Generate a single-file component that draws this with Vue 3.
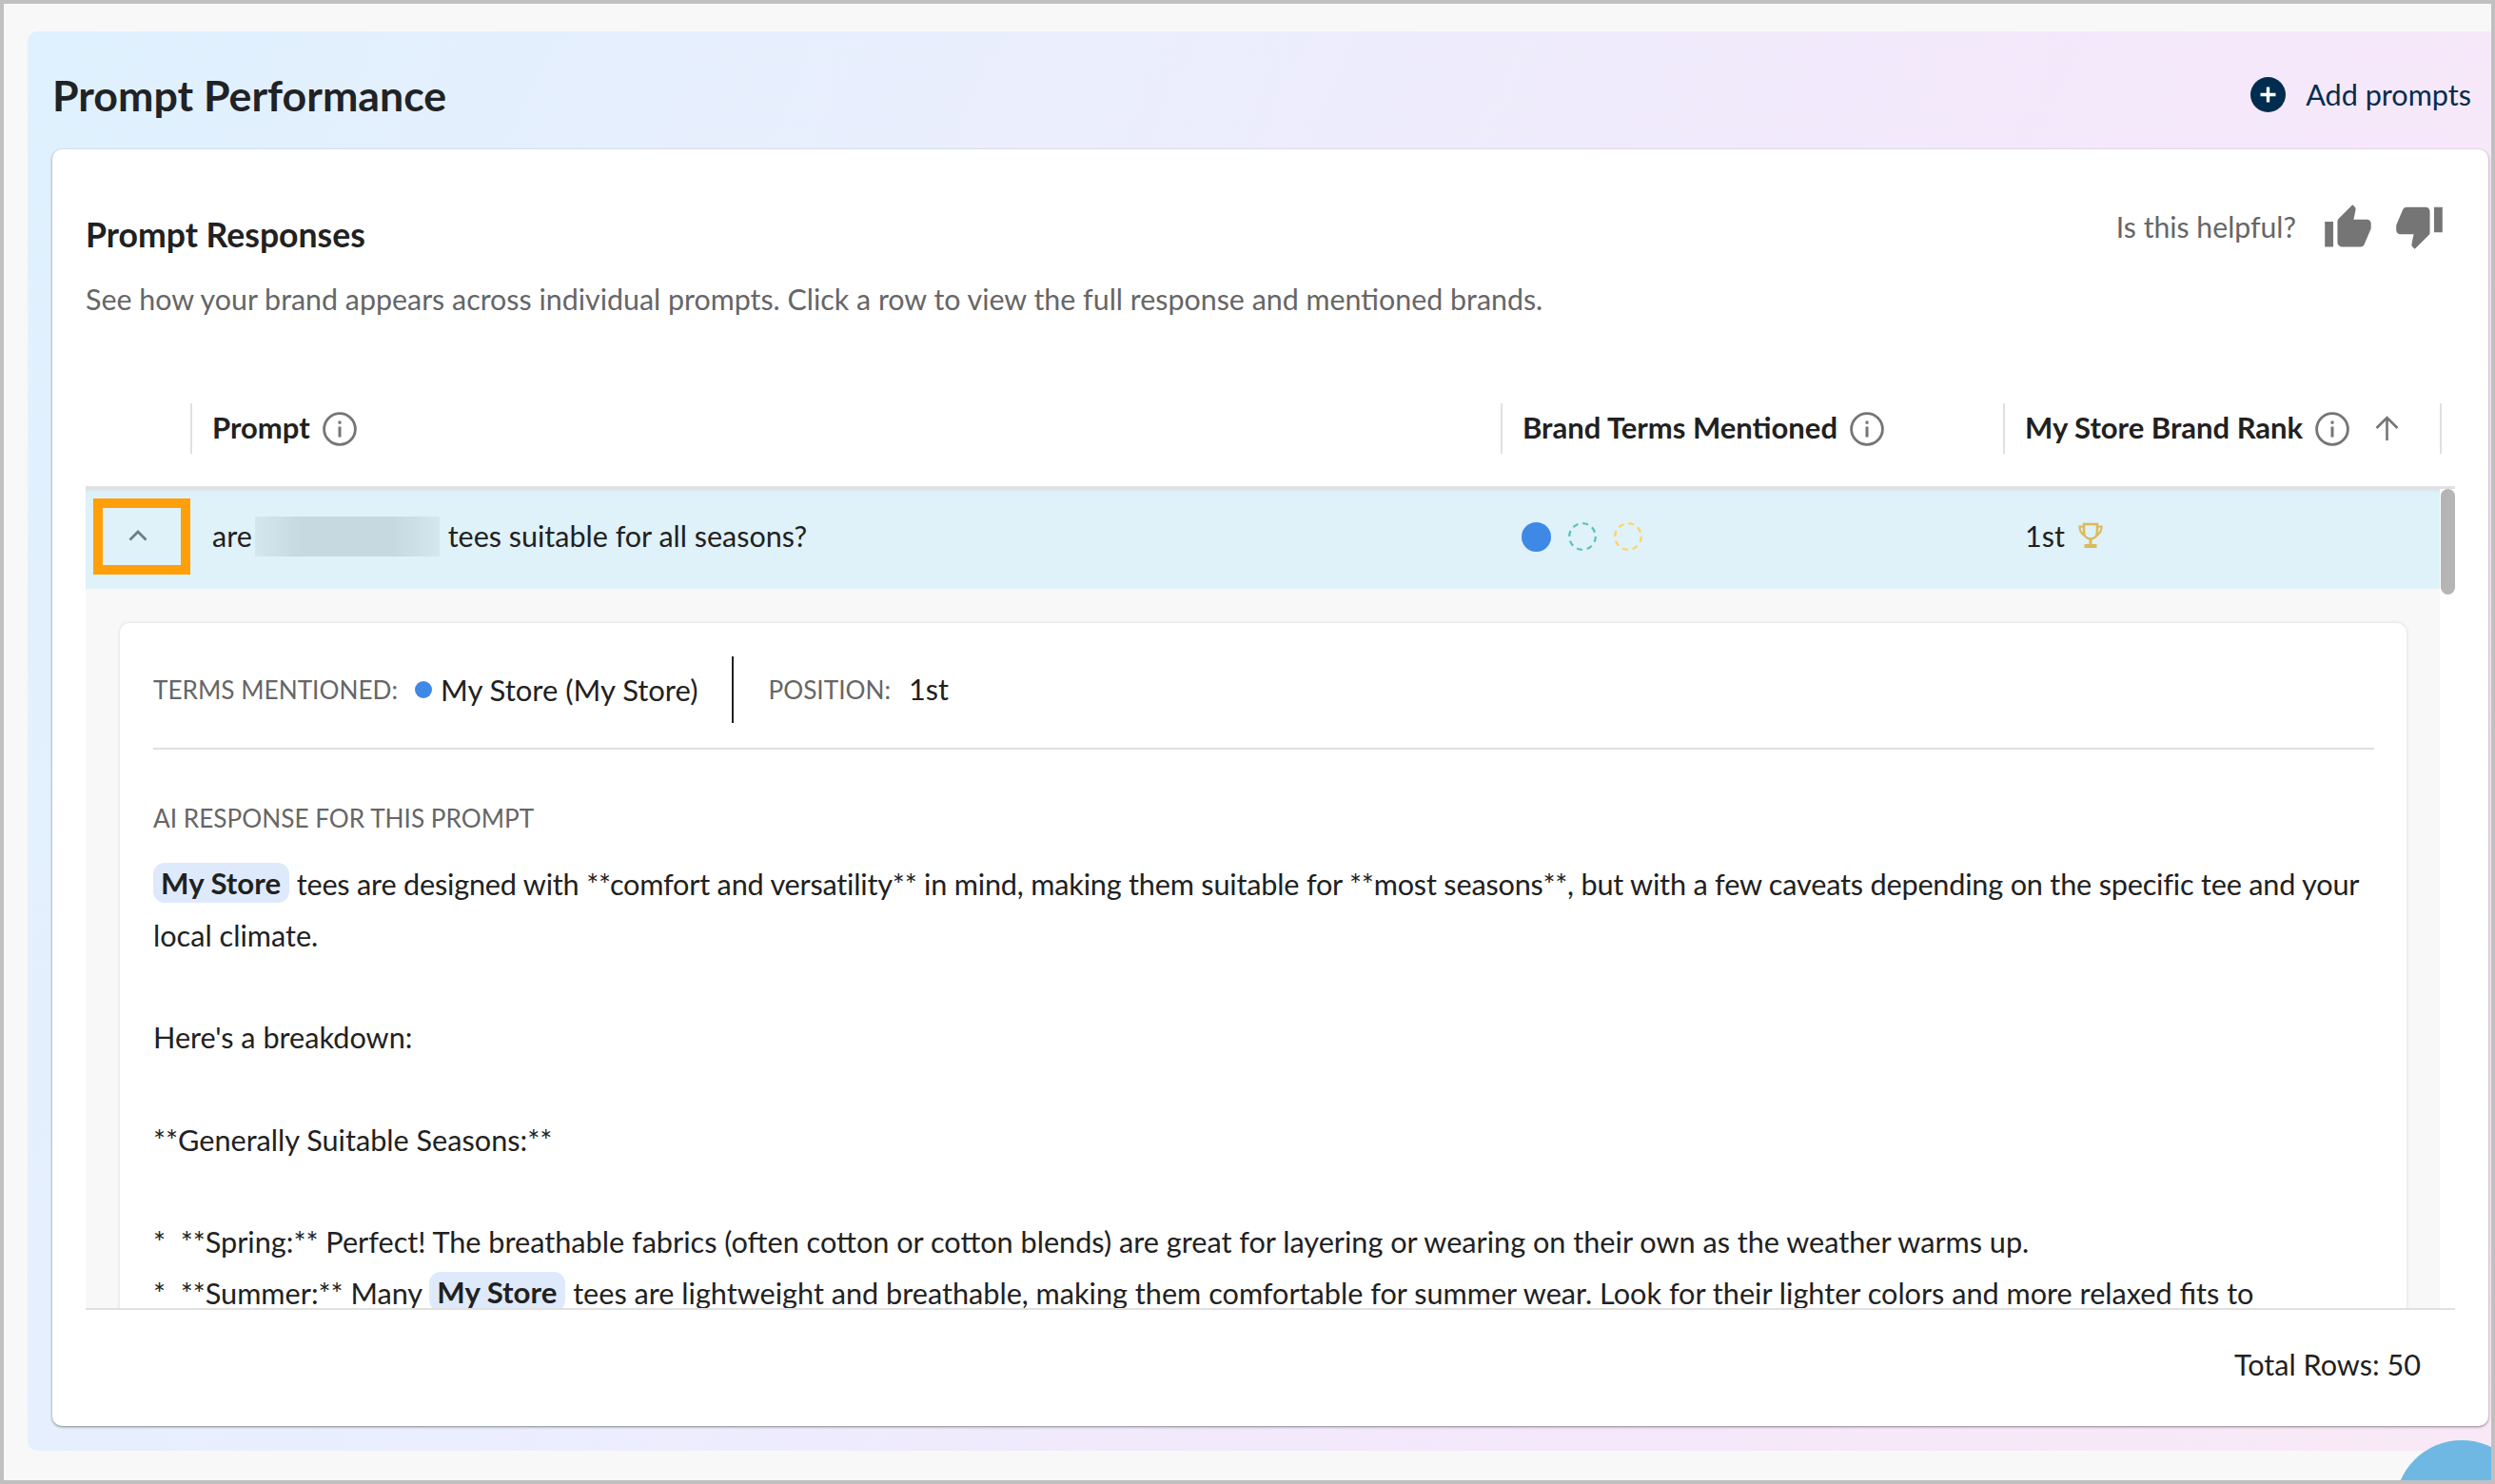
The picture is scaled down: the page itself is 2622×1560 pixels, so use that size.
<script setup>
const intro = 'See how your brand appears across individual prompts. Click a row to view the full response and mentioned brands.'
const columns = [
  { label: 'Prompt', info: true },
  { label: 'Brand Terms Mentioned', info: true },
  { label: 'My Store Brand Rank', info: true, sort: true }
]
const segments = [
  { t: 'My Store', cls: 'chip' },
  { t: ' tees are designed with **comfort and versatility** in mind, making them suitable for **most seasons**, but with a few caveats depending on the specific tee and your', cls: 'tight' },
  { t: ' local climate.\n\nHere\'s a breakdown:\n\n**Generally Suitable Seasons:**\n\n*  **Spring:** Perfect! The breathable fabrics (often cotton or cotton blends) are great for layering or wearing on their own as the weather warms up.\n*  **Summer:** Many ' },
  { t: 'My Store', cls: 'chip' },
  { t: ' tees are lightweight and breathable, making them comfortable for summer wear. Look for their lighter colors and more relaxed fits to' }
]
</script>

<template>
  <div class="page">
    <section class="panel">
      <header class="panel-head">
        <h1 class="panel-title">Prompt Performance</h1>
        <div class="add">
          <svg class="add-icon" viewBox="0 0 37 37">
            <circle cx="18.5" cy="18.5" r="18.5" fill="#002d4f" />
            <path d="M18.5 10.5v16M10.5 18.5h16" stroke="#fff" stroke-width="3.4" fill="none" />
          </svg>
          <span>Add prompts</span>
        </div>
      </header>

      <div class="card">
        <div class="intro">
          <div>
            <h2 class="card-title">Prompt Responses</h2>
            <p class="card-sub">{{ intro }}</p>
          </div>
          <div class="helpful">
            <span class="helpful-text">Is this helpful?</span>
            <svg class="thumb thumb-up" viewBox="0 0 24 24"><path d="M1 21h4V9H1v12zm22-11c0-1.1-.9-2-2-2h-6.31l.95-4.57.03-.32c0-.41-.17-.79-.44-1.06L14.17 1 7.59 7.59C7.22 7.95 7 8.45 7 9v10c0 1.1.9 2 2 2h9c.83 0 1.54-.5 1.8-1.22l3.02-7.05c.08-.23.13-.47.13-.73v-2z" /></svg>
            <svg class="thumb thumb-down" viewBox="0 0 24 24"><path d="M15 3H6c-.83 0-1.54.5-1.84 1.22l-3.02 7.05c-.09.23-.14.47-.14.73v2c0 1.1.9 2 2 2h6.31l-.95 4.57-.03.32c0 .41.17.79.44 1.06L9.83 23l6.59-6.59c.36-.36.58-.86.58-1.41V5c0-1.1-.9-2-2-2zm4 0v12h4V3h-4z" /></svg>
          </div>
        </div>

        <div class="thead">
          <div class="th-empty"></div>
          <div v-for="c in columns" :key="c.label" class="th">
            <span class="th-label">{{ c.label }}</span>
            <svg class="info" viewBox="0 0 36 36">
              <circle cx="18" cy="18" r="16.4" fill="none" stroke="#757575" stroke-width="2.8" />
              <rect x="16.5" y="9.5" width="3" height="3.2" fill="#757575" />
              <rect x="16.5" y="15.5" width="3" height="11" fill="#757575" />
            </svg>
            <svg v-if="c.sort" class="sort" viewBox="0 0 27 27">
              <path d="M13.5 26V2M2.5 13L13.5 2l11 11" fill="none" stroke="#757575" stroke-width="2.6" />
            </svg>
          </div>
          <div class="th-end"></div>
        </div>

        <div class="tbody">
          <div class="row">
            <div class="toggle">
              <svg class="chevron" viewBox="0 0 20 12"><path d="M1.5 10.5L10 2l8.500 8.500" fill="none" stroke="#6d7c86" stroke-width="2.800" /></svg>
            </div>
            <div class="cell prompt-cell">
              <span>are</span>
              <span class="redacted"></span>
              <span>tees suitable for all seasons?</span>
            </div>
            <div class="cell dots">
              <span class="dot solid"></span>
              <svg class="ring" viewBox="0 0 30 30"><circle cx="15" cy="15" r="13.800" fill="none" stroke="#5cc2ba" stroke-width="2.300" stroke-dasharray="6 4.800" /></svg>
              <svg class="ring" viewBox="0 0 30 30"><circle cx="15" cy="15" r="13.800" fill="none" stroke="#ffd55a" stroke-width="2.300" stroke-dasharray="6 4.800" /></svg>
            </div>
            <div class="cell rank-cell">
              <span>1st</span>
              <svg class="trophy" viewBox="0 0 26 27">
                <path d="M6 2h14v8c0 4.500-3 7.500-7 7.500S6 14.500 6 10V2z" fill="none" stroke="#dcb95a" stroke-width="2.600" />
                <path d="M6 4.500H1.500c0 5 1.500 8 6 9.500M20 4.500h4.500c0 5-1.500 8-6 9.500" fill="none" stroke="#dcb95a" stroke-width="2.200" />
                <path d="M13 17.500V24" stroke="#dcb95a" stroke-width="3" />
                <rect x="6.500" y="23" width="13" height="4" fill="#dcb95a" />
              </svg>
            </div>
          </div>

          <div class="expand">
            <div class="detail">
              <div class="meta">
                <span class="meta-label">TERMS MENTIONED:</span>
                <span class="meta-dot"></span>
                <span class="meta-value">My Store (My Store)</span>
                <span class="meta-sep"></span>
                <span class="meta-label">POSITION:</span>
                <span class="meta-pos">1st</span>
              </div>
              <div class="response-label">AI RESPONSE FOR THIS PROMPT</div>
              <div class="response"><span v-for="(s, i) in segments" :key="i" :class="s.cls">{{ s.t }}</span></div>
            </div>
          </div>
          <div class="scrollbar"></div>
        </div>

        <footer class="tfoot">Total Rows: 50</footer>
      </div>
    </section>
    <div class="fab"></div>
  </div>
</template>

<style>
html, body { margin: 0; padding: 0; }
</style>

<style scoped>
* { box-sizing: border-box; }
.page {
  position: relative;
  width: 2622px;
  height: 1560px;
  overflow: hidden;
  border: 4px solid #c0c0c0;
  background: #f8f8f8;
  padding: 29px 0 31px 25px;
  font-family: Lato, "Liberation Sans", sans-serif;
  color: #212121;
}
.panel {
  height: 100%;
  display: flex;
  flex-direction: column;
  border-radius: 10px 0 0 10px;
  padding: 0 3px 26px 26px;
  background: linear-gradient(115deg, #dff1fe 0%, #ebeefd 35%, #f5e8fb 70%, #f9e9f6 100%);
}
.panel-head {
  height: 124px;
  flex: none;
  display: flex;
  align-items: center;
  justify-content: space-between;
  padding: 9px 18px 0 0;
}
.panel-title { margin: 0; font-size: 44.7px; line-height: 56px; font-weight: 700; color: #1f2326; }
.add { display: flex; align-items: center; gap: 21px; font-size: 30.6px; color: #002d4f; }
.add-icon { width: 37px; height: 37px; display: block; }
.card {
  flex: 1;
  min-height: 0;
  background: #fff;
  border-radius: 10px;
  box-shadow: 0 1px 3px rgba(0, 0, 0, .45);
  padding: 0 35px;
  display: flex;
  flex-direction: column;
}
.intro {
  height: 267px;
  flex: none;
  display: flex;
  justify-content: space-between;
  padding-top: 66px;
  padding-right: 11px;
}
.card-title { margin: 0; font-size: 35.6px; line-height: 48px; font-weight: 700; color: #212121; }
.card-sub { margin: 21px 0 0; font-size: 30.4px; line-height: 44px; color: #666; }
.helpful { display: flex; align-items: flex-start; margin-top: -12px; }
.helpful-text { font-size: 30.2px; line-height: 55px; color: #666; margin-right: 28px; }
.thumb { width: 53px; height: 53px; display: block; fill: #757575; }
.thumb-up { margin-top: 2px; margin-right: 22px; }
.thead {
  height: 90px;
  flex: none;
  display: grid;
  grid-template-columns: 110px 1377px 528px 459px 16px;
  width: 2490px;
  align-items: start;
  border-bottom: 3px solid #e0e0e0;
}
.th {
  height: 53px;
  display: flex;
  align-items: center;
  border-left: 2px solid #e0e0e0;
  padding-left: 21px;
}
.th-label { font-size: 31px; font-weight: 700; color: #212121; margin-top: -3px; }
.info { width: 36px; height: 36px; margin-left: 13px; display: block; }
.sort { width: 27px; height: 27px; margin-left: 26px; display: block; }
.th-end { height: 53px; border-left: 2px solid #e0e0e0; }
.tbody {
  position: relative;
  width: 2490px;
  height: 863px;
  flex: none;
  overflow: hidden;
  border-bottom: 2px solid #e0e0e0;
}
.row {
  height: 105px;
  width: 2474px;
  padding-bottom: 5px;
  display: grid;
  grid-template-columns: 110px 1377px 528px 459px;
  align-items: center;
  background: #dff1f9;
  box-shadow: inset 0 4px 4px -3px rgba(0, 0, 0, .08);
  position: relative;
  font-size: 30.5px;
}
.toggle {
  position: absolute;
  left: 8px;
  top: 10px;
  width: 102px;
  height: 80px;
  border: 10px solid #ff9f0a;
  display: flex;
  align-items: center;
  justify-content: center;
  padding: 0 8px 3px 0;
}
.chevron { width: 20px; height: 12px; display: block; }
.prompt-cell { grid-column: 2; display: flex; align-items: center; padding-left: 23px; padding-bottom: 3px; }
.redacted {
  width: 194px;
  height: 42px;
  margin: 2px 9px 0 3px;
  background: linear-gradient(90deg, #d5e7ee, #c7d9e0 25%, #c7d9e0 75%, #d5e7ee);
}
.dots { display: flex; align-items: center; gap: 18px; padding-left: 22px; }
.dot.solid { width: 31px; height: 31px; border-radius: 50%; background: #3e88e6; }
.ring { width: 30px; height: 30px; display: block; }
.rank-cell { display: flex; align-items: center; padding-left: 23px; padding-bottom: 3px; gap: 14px; }
.trophy { width: 26px; height: 27px; display: block; }
.expand {
  width: 2474px;
  height: 756px;
  background: #f8f8f8;
  padding: 36px 35px 0 36px;
}
.detail {
  background: #fff;
  border-radius: 10px 10px 0 0;
  box-shadow: 0 0 4px rgba(0, 0, 0, .12);
  height: 800px;
  padding: 35px 34px 0 35px;
}
.meta {
  height: 98px;
  display: flex;
  align-items: flex-start;
  border-bottom: 2px solid #e0e0e0;
}
.meta-label { font-size: 26.2px; line-height: 70px; color: #666; }
.meta-dot { width: 18px; height: 18px; border-radius: 50%; background: #3e88e6; margin: 26px 9px 0 18px; }
.meta-value { font-size: 31px; line-height: 70px; color: #212121; }
.meta-sep { width: 2px; height: 70px; background: #212121; margin: 0 36px 0 36px; }
.meta-pos { font-size: 30.6px; line-height: 70px; margin-left: 19px; }
.response-label { margin-top: 50px; font-size: 26.2px; line-height: 44px; color: #666; }
.response {
  margin-top: 21px;
  font-size: 30.65px;
  line-height: 53.7px;
  color: #212121;
  white-space: pre-wrap;
}
.tight { letter-spacing: -0.2px; }
.chip {
  display: inline-block;
  height: 42px;
  line-height: 42px;
  padding: 0 9px 0 8px;
  border-radius: 12px;
  background: #deeafb;
  font-weight: 700;
  font-size: 31.2px;
  vertical-align: 1px;
}
.scrollbar {
  position: absolute;
  right: 0;
  top: 0;
  width: 15px;
  height: 111px;
  border-radius: 8px;
  background: #b5b5b5;
}
.tfoot {
  flex: 1;
  display: flex;
  align-items: center;
  justify-content: flex-end;
  padding: 0 36px 0 0;
  font-size: 30.6px;
  margin-top: -8px;
}
.fab {
  position: absolute;
  left: 2513px;
  top: 1510px;
  width: 140px;
  height: 140px;
  border-radius: 50%;
  background: #6fb8e4;
}
</style>
